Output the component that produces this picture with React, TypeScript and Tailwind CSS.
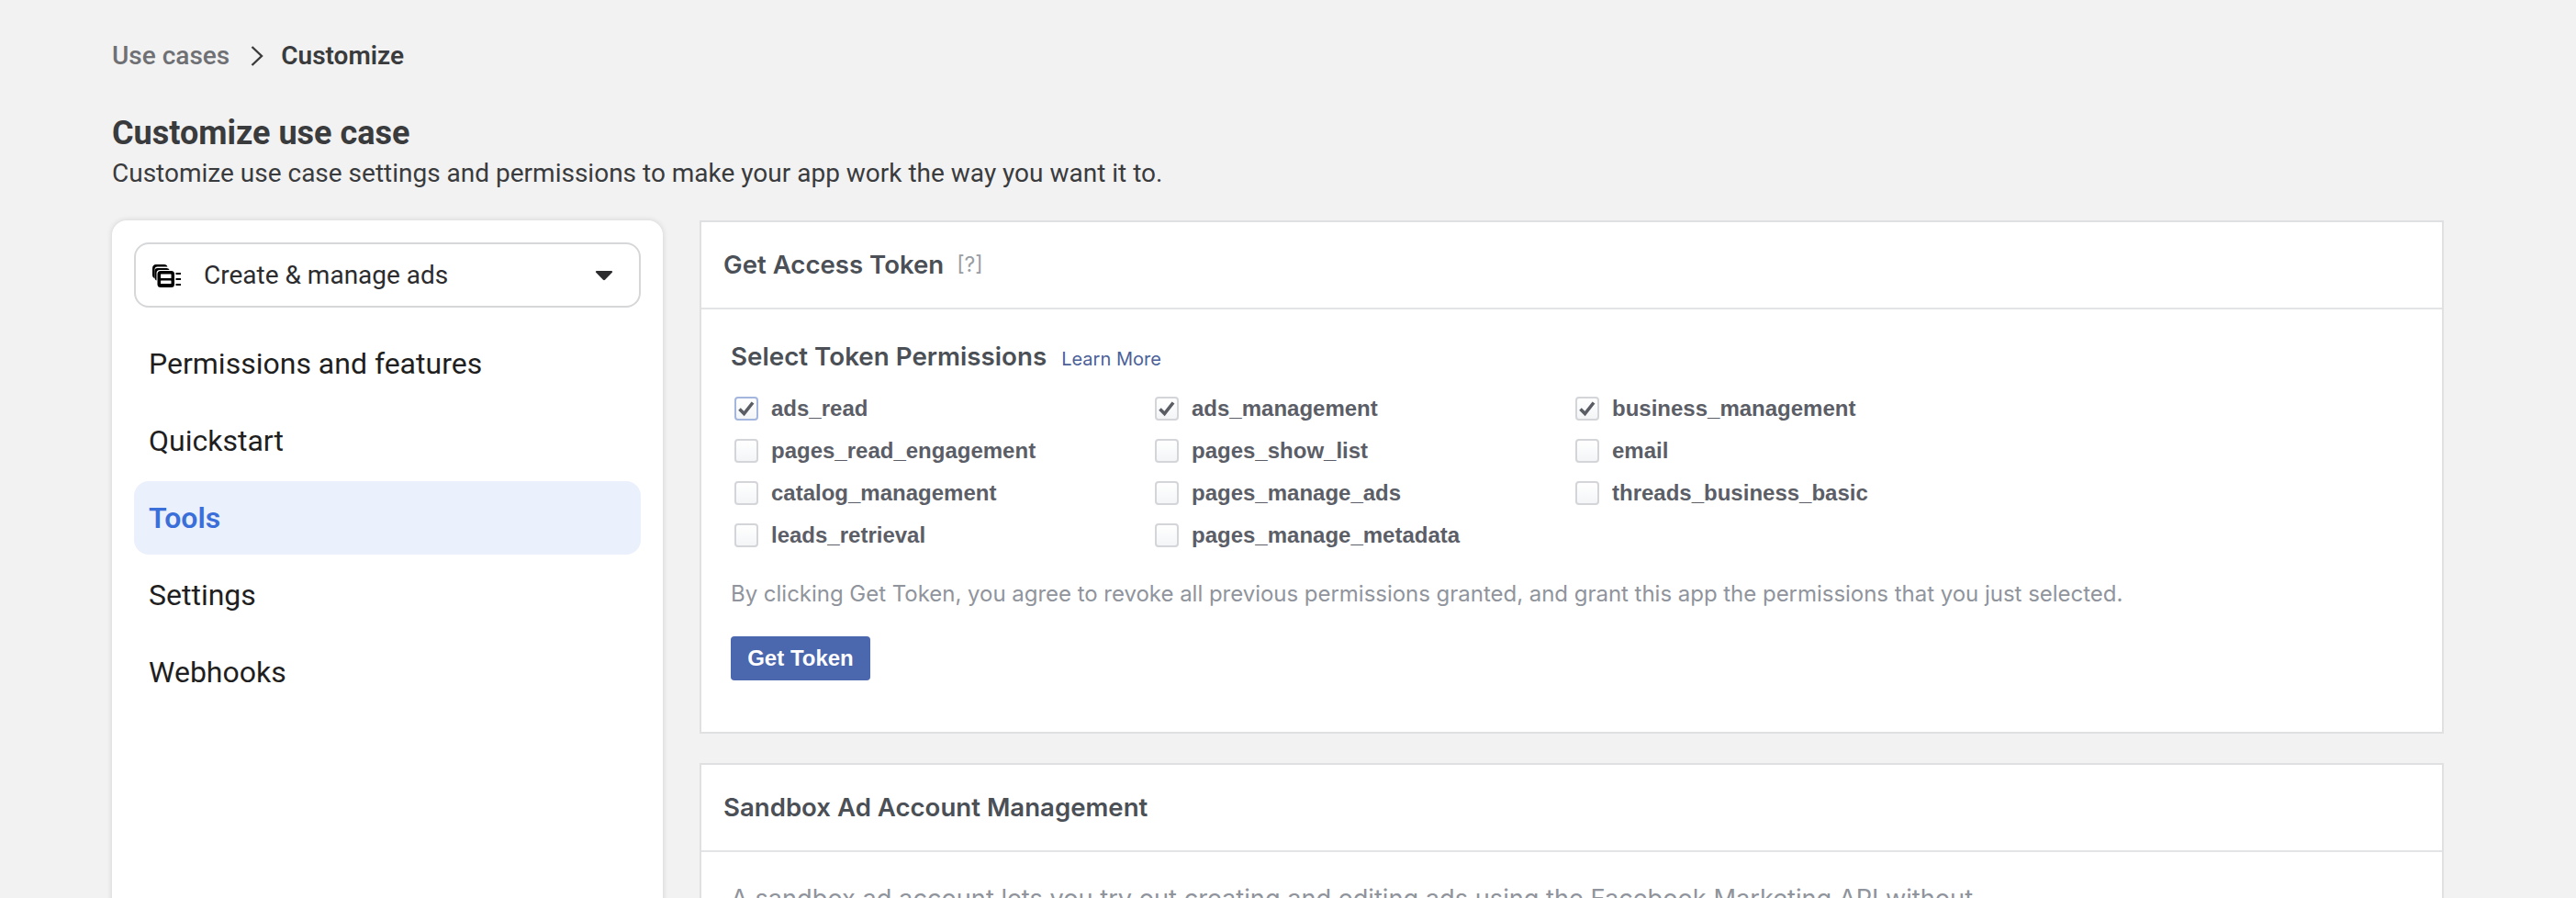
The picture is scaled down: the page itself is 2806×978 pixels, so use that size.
import React from "react";

const columns = [
  [
    { label: "ads_read", checked: true, focused: true },
    { label: "pages_read_engagement" },
    { label: "catalog_management" },
    { label: "leads_retrieval" },
  ],
  [
    { label: "ads_management", checked: true },
    { label: "pages_show_list" },
    { label: "pages_manage_ads" },
    { label: "pages_manage_metadata" },
  ],
  [
    { label: "business_management", checked: true },
    { label: "email" },
    { label: "threads_business_basic" },
  ],
];

const nav = ["Permissions and features", "Quickstart", "Tools", "Settings", "Webhooks"];

function AdsIcon() {
  return (
    <svg width="32" height="26" viewBox="0 0 32 26" className="shrink-0">
      <path d="M1 5.500C1 2.500 2.500 1 5 1h9c1.800 0 3 1 3.500 2.500H6.500C4.500 3.500 3.500 4.500 3.500 6.500V16C1.800 15.500 1 14 1 12.500Z" fill="#000" />
      <path d="M3.500 8C3.500 6 4.500 5 6.500 5h10c1.500 0 2.500.7 3 2H9C6.800 7 5.500 8.300 5.500 10.500v8C4.200 18 3.500 16.800 3.500 15Z" fill="#000" />
      <rect x="6.500" y="8" width="18.500" height="18" rx="3.500" fill="#000" />
      <rect x="10" y="11.500" width="11.500" height="4.500" rx="0.500" fill="#fff" />
      <rect x="10" y="18.500" width="11.500" height="3.500" rx="0.500" fill="#fff" />
      <rect x="26.500" y="10" width="5.500" height="2" fill="#000" />
      <rect x="26.500" y="16" width="5.500" height="2" fill="#000" />
      <rect x="26.500" y="22" width="5.500" height="2" fill="#000" />
    </svg>
  );
}

function Check({ label, checked, focused }: { label: string; checked?: boolean; focused?: boolean }) {
  return (
    <div className="flex h-[26px] items-center gap-[14px]">
      <span
        className={`flex h-[26px] w-[26px] shrink-0 items-center justify-center rounded-[4px] border-2 bg-gradient-to-b from-white to-[#f4f5f7] ${
          focused ? "border-[#a4b6de]" : "border-[#d3d5d9]"
        }`}
      >
        {checked && (
          <svg width="20" height="18" viewBox="0 0 20 18">
            <path d="M2.500 9.500 7.500 14.500 17 2.500" fill="none" stroke="#5a5d64" strokeWidth="3.600" />
          </svg>
        )}
      </span>
      <span className="font-['Liberation_Sans',sans-serif] text-[24px] leading-[26px] font-bold whitespace-nowrap text-[#5b5e66]">
        {label}
      </span>
    </div>
  );
}

function PanelHeader({ children }: { children: React.ReactNode }) {
  return (
    <div className="flex h-[95px] items-center gap-[14px] border-b-2 border-[#e3e4e6] px-[24px] font-['Inter',sans-serif]">
      {children}
    </div>
  );
}

export default function App() {
  return (
    <div className="h-[978px] overflow-hidden bg-[#f2f2f2] pt-[42px] pr-[144px] pl-[122px] font-['Roboto',sans-serif]">
      <div className="flex h-[34px] translate-y-[2px] items-center text-[28px] leading-[34px] font-medium">
        <span className="text-[#6f7074]">Use cases</span>
        <svg width="16" height="24" viewBox="0 0 16 24" className="mr-[18px] ml-[22px]">
          <path d="M2.500 2 13 12 2.500 22" fill="none" stroke="#3b3b3d" strokeWidth="2.400" />
        </svg>
        <span className="font-semibold text-[#3a3b3d]">Customize</span>
      </div>

      <h1 className="mt-[48px] text-[36px] leading-[42px] font-bold text-[#3a3b3d]">Customize use case</h1>
      <p className="mt-[6px] text-[28px] leading-[34px] text-[#3a3b3d]">
        Customize use case settings and permissions to make your app work the way you want it to.
      </p>

      <div className="mt-[34px] flex gap-[40px]">
        <aside className="h-[900px] w-[600px] shrink-0 rounded-[16px] bg-white px-[24px] pt-[24px] shadow-[0_0_6px_rgba(0,0,0,0.14)]">
          <div className="flex h-[71px] items-center rounded-[16px] border-2 border-[#d6d7d9] pr-[28px] pl-[17px]">
            <AdsIcon />
            <span className="ml-[25px] text-[28px] text-[#2c2c2e]">Create &amp; manage ads</span>
            <svg width="20" height="12" viewBox="0 0 20 12" className="ml-auto">
              <path d="M2 1h16c1 0 1.500 1 .8 1.800L11 10.800c-.6.500-1.400.500-2 0L1.200 2.800C.5 2 1 1 2 1Z" fill="#2c2c2e" />
            </svg>
          </div>
          <nav className="mt-[21px] flex flex-col gap-[4px]">
            {nav.map((item) => (
              <div
                key={item}
                className={`flex h-[80px] items-center rounded-[16px] px-[16px] text-[32px] ${
                  item === "Tools" ? "bg-[#eaf0fc] font-semibold text-[#3a6ed8]" : "text-[#1f1f21]"
                }`}
              >
                {item}
              </div>
            ))}
          </nav>
        </aside>

        <main className="flex min-w-0 flex-1 flex-col gap-[32px]">
          <section className="h-[559px] shrink-0 border-2 border-[#dfe0e2] bg-white">
            <PanelHeader>
              <h2 className="text-[27.6px] font-semibold text-[#4b4f56]">Get Access Token</h2>
              <span className="text-[23px] text-[#9a9da3]">[?]</span>
            </PanelHeader>
            <div className="px-[32px] pt-[34px]">
              <div className="flex items-baseline gap-[16px] font-['Inter',sans-serif]">
                <h3 className="text-[27.75px] leading-[34px] font-semibold text-[#4b4f56]">Select Token Permissions</h3>
                <a className="text-[20px] text-[#4a6199]">Learn More</a>
              </div>
              <div className="mt-[26px] ml-[4px] flex">
                {columns.map((col, i) => (
                  <div key={i} className="flex w-[458px] flex-col gap-[20px]">
                    {col.map((c) => (
                      <Check key={c.label} {...c} />
                    ))}
                  </div>
                ))}
              </div>
              <p className="mt-[36px] font-['Inter',sans-serif] text-[24px] leading-[30px] tracking-[-0.025px] whitespace-nowrap text-[#90949c]">
                By clicking Get Token, you agree to revoke all previous permissions granted, and grant this app the permissions that you just selected.
              </p>
              <button className="mt-[31px] flex h-[48px] w-[152px] items-center justify-center rounded-[4px] bg-[#4b67ae] font-['Liberation_Sans',sans-serif] text-[24px] font-bold text-white">
                Get Token
              </button>
            </div>
          </section>

          <section className="h-[300px] shrink-0 border-2 border-[#dfe0e2] bg-white">
            <PanelHeader>
              <h2 className="text-[27.6px] font-semibold text-[#4b4f56]">Sandbox Ad Account Management</h2>
            </PanelHeader>
            <p className="px-[32px] pt-[36px] font-['Inter',sans-serif] text-[27.2px] leading-[30px] whitespace-nowrap text-[#90949c]">
              A sandbox ad account lets you try out creating and editing ads using the Facebook Marketing API without
            </p>
          </section>
        </main>
      </div>
    </div>
  );
}
